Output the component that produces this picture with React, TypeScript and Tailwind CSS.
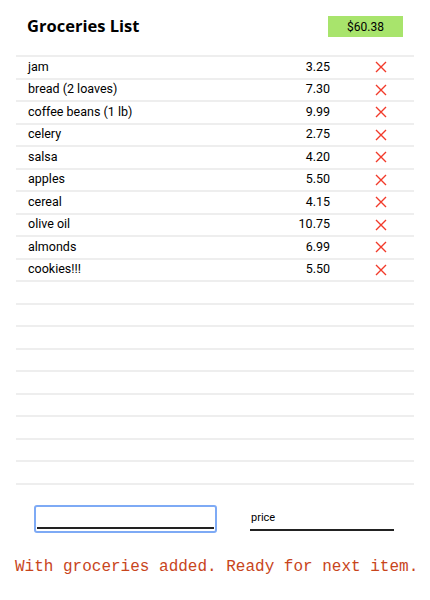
import React from "react";

const items: [string, string][] = [
  ["jam", "3.25"],
  ["bread (2 loaves)", "7.30"],
  ["coffee beans (1 lb)", "9.99"],
  ["celery", "2.75"],
  ["salsa", "4.20"],
  ["apples", "5.50"],
  ["cereal", "4.15"],
  ["olive oil", "10.75"],
  ["almonds", "6.99"],
  ["cookies!!!", "5.50"],
];

function XIcon() {
  return (
    <svg width="12" height="12" viewBox="0 0 12 12" className="block">
      <path d="M1 1L11 11M11 1L1 11" stroke="#f23a2a" strokeWidth="1.4" />
    </svg>
  );
}

export default function App() {
  const empties = Array.from({ length: 9 });
  return (
    <div className="w-[430px] h-[600px] bg-white relative" style={{ fontFamily: "Roboto, sans-serif" }}>
      <div className="flex items-center justify-between pl-[27px] pr-[27px] pt-[16px] h-[37px]">
        <div className="text-[16.5px] font-bold text-black leading-none" style={{ fontFamily: "'Open Sans', sans-serif" }}>
          Groceries List
        </div>
        <div className="w-[75px] h-[21px] bg-[#a8e46c] flex items-center justify-center text-[12px] text-black">
          $60.38
        </div>
      </div>
      <div className="mx-[16px] mt-[18px] border-t-2 border-[#eeeeee]">
        {items.map(([name, price], i) => (
          <div key={i} className="h-[22.5px] flex items-center border-b-2 border-[#eeeeee] text-[12.5px] text-black pr-[27px]">
            <div className="pl-[12px] flex-1">{name}</div>
            <div className="w-[60px] text-right">{price}</div>
            <div className="w-[45px]" />
            <div className="w-[12px] flex items-center justify-center">
              <XIcon />
            </div>
          </div>
        ))}
        {empties.map((_, i) => (
          <div key={"e" + i} className="h-[22.5px] border-b-2 border-[#eeeeee]" />
        ))}
      </div>
      <div className="flex items-end mt-[20px] pl-[34px]">
        <div className="w-[183px] h-[28px] border-2 border-[#7eaaf5] rounded-[3px] px-[1px] flex items-end pb-[2px]">
          <div className="w-full h-[2px] bg-[#222]" />
        </div>
        <div className="ml-[33px] w-[144px] mb-[2px] border-b-2 border-[#222] h-[24px] flex items-end pb-[2px] text-[11px] text-black pl-[1px]">
          price
        </div>
      </div>
      <div className="mt-[22px] pl-[15px] text-[16px] text-[#c8451c] whitespace-nowrap" style={{ fontFamily: "'Liberation Mono', monospace" }}>
        With groceries added. Ready for next item.
      </div>
    </div>
  );
}
